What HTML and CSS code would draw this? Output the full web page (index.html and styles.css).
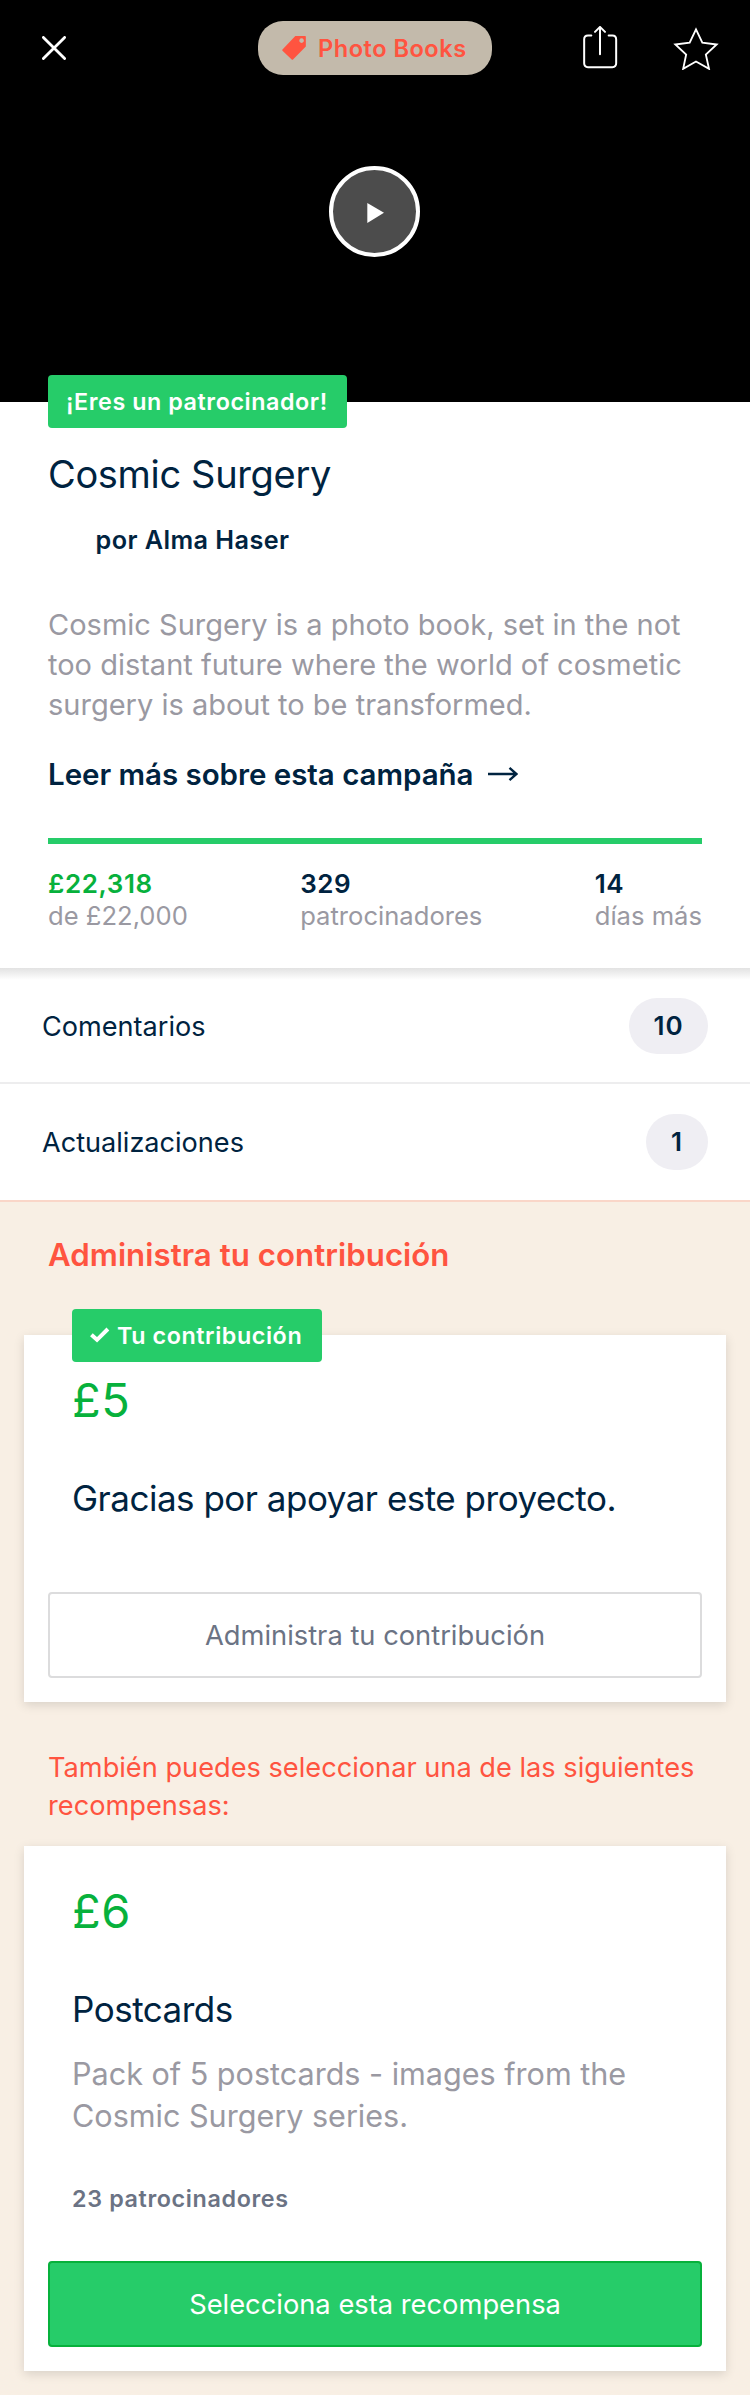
FILE: index.html
```html
<!DOCTYPE html>
<html lang="es">
<head>
<meta charset="utf-8">
<title>Cosmic Surgery</title>
<link rel="stylesheet" href="styles.css">
</head>
<body>
<header class="hero">
  <nav class="topbar">
    <svg class="close" width="24" height="24" viewBox="0 0 24 24"><path d="M1.4 1.4 22.6 22.6M22.6 1.4 1.4 22.6"/></svg>
    <div class="category">
      <svg class="tag" width="24" height="24" viewBox="0 0 72 73"><path fill-rule="evenodd" d="M40 0H70Q72 0 72 2V32L33 71.500Q31 73.500 29 71.500L1 44.500Q-1 43 1 41ZM59 7a7 7 0 1 0 0.100 0Z"/></svg>
      <span>Photo Books</span>
    </div>
    <svg class="share" width="38" height="44" viewBox="33 33 114 132"><path d="M64 61.500H54Q42.500 61.500 42.500 73V145Q42.500 156.500 54 156.500H127Q138.500 156.500 138.500 145V73Q138.500 61.500 127 61.500H116M90 118V36M75 50.500 90 35.500 105 50.500"/></svg>
    <svg class="star" width="46" height="44" viewBox="309 33 138 132"><path d="M378 43 397 83 440 88.500 407.500 118.500 417 161.500 378 139.500 339.500 161.500 348.500 118.500 316 88.500 359 83Z"/></svg>
  </nav>
  <svg class="play" width="91" height="91" viewBox="0 0 91 91"><circle cx="45.500" cy="45.500" r="43.500"/><path d="M38.300 36.900 55 46.800 38.300 57Z"/></svg>
</header>

<section class="summary">
  <div class="badge">¡Eres un patrocinador!</div>
  <h1 class="title">Cosmic Surgery</h1>
  <p class="author">por Alma Haser</p>
  <p class="blurb">Cosmic Surgery is a photo book, set in the not<br>too distant future where the world of cosmetic<br>surgery is about to be transformed.</p>
  <a class="more">Leer más sobre esta campaña
    <svg class="arrow" width="30" height="16" viewBox="0 0 30 16"><path d="M0 8H28M21.500 1.800 28.500 8 21.500 14.200"/></svg>
  </a>
  <div class="progress"></div>
  <div class="stats">
    <div class="stat"><b class="raised">£22,318</b><span>de £22,000</span></div>
    <div class="stat"><b>329</b><span>patrocinadores</span></div>
    <div class="stat"><b>14</b><span>días más</span></div>
  </div>
</section>

<section class="links">
  <div class="row first"><span>Comentarios</span><span class="count">10</span></div>
  <div class="row last"><span>Actualizaciones</span><span class="count single">1</span></div>
</section>

<main class="rewards">
  <h2 class="heading">Administra tu contribución</h2>
  <article class="card">
    <div class="badge pledge">
      <svg class="check" width="20" height="18" viewBox="0 0 20 18"><path d="M1.400 8.800 7 13.800 17.900 3"/></svg>
      <span>Tu contribución</span>
    </div>
    <div class="amount mine">£5</div>
    <h3 class="name">Gracias por apoyar este proyecto.</h3>
    <div class="button manage">Administra tu contribución</div>
  </article>
  <p class="also">También puedes seleccionar una de las siguientes<br>recompensas:</p>
  <article class="card">
    <div class="amount">£6</div>
    <h3 class="name">Postcards</h3>
    <p class="details">Pack of 5 postcards - images from the<br>Cosmic Surgery series.</p>
    <p class="backers">23 patrocinadores</p>
    <div class="button select">Selecciona esta recompensa</div>
  </article>
</main>
</body>
</html>
```
FILE: styles.css
```css
* { box-sizing: border-box; }
body {
  margin: 0;
  background: #fff;
  color: #002340;
  font-family: Inter, "Liberation Sans", sans-serif;
}
h1, h2, h3, p { margin: 0; font-weight: 400; }
svg { display: block; flex: none; }

/* Video header */
.hero { height: 402px; background: #000; }
.topbar { display: flex; align-items: center; height: 96px; padding: 0 31px 0 42px; }
.close { fill: none; stroke: #fff; stroke-width: 2.8; stroke-linecap: round; }
.category {
  display: flex;
  align-items: center;
  gap: 12px;
  width: 234px;
  height: 54px;
  margin-left: 192px;
  padding-left: 24px;
  border-radius: 25px;
  background: #c3baab;
  color: #ff5440;
  font-size: 23.6px;
  font-weight: 600;
  letter-spacing: .5px;
  white-space: nowrap;
}
.tag { fill: #ff5440; overflow: visible; }
.share, .star { fill: none; stroke: #fff; stroke-width: 6; }
.share { margin-left: 89px; stroke-linecap: round; stroke-linejoin: round; }
.star { margin-left: 54px; stroke-width: 5.500; }
.play { margin: 70px 0 0 329px; }
.play circle { fill: #4c4c4c; stroke: #fff; stroke-width: 4; }
.play path { fill: #fff; }

.badge {
  display: flex;
  align-items: center;
  width: fit-content;
  height: 53px;
  padding: 0 18px;
  border-radius: 4px;
  background: #26cc69;
  color: #fff;
  font-size: 23.3px;
  font-weight: 600;
  letter-spacing: .57px;
  white-space: nowrap;
}

/* Campaign summary */
.summary { display: flex; flex-direction: column; height: 566px; padding: 0 48px; }
.summary .badge { width: 299px; margin-top: -27px; }
.title { margin-top: 22px; font-size: 38px; line-height: 48px; letter-spacing: -.34px; }
.author {
  margin: 26px 0 0 47.500px;
  font-size: 25.2px;
  font-weight: 600;
  line-height: 32px;
  letter-spacing: .44px;
}
.blurb { margin-top: 48.500px; color: #9a99a2; font-size: 29px; line-height: 40px; white-space: nowrap; }
.more {
  display: flex;
  align-items: center;
  gap: 15px;
  margin-top: 29px;
  font-size: 29.5px;
  font-weight: 600;
  line-height: 40px;
  letter-spacing: -.04px;
}
.arrow { fill: none; stroke: #002340; stroke-width: 2.400; }
.progress { flex: none; height: 6px; margin-top: 44.500px; background: #26cc69; }
.stats { display: flex; justify-content: space-between; margin-top: 24px; font-size: 25.6px; line-height: 32px; }
.stat { display: flex; flex-direction: column; }
.stat b { font-size: 26px; font-weight: 600; letter-spacing: .6px; }
.stat span { color: #9a99a2; }
.stat .raised { color: #07b13c; }

/* Comments and updates */
.links { background: linear-gradient(#e2e2e2, #fff 12px); }
.row {
  display: flex;
  align-items: center;
  justify-content: space-between;
  height: 118px;
  padding: 0 42px;
  border-bottom: 2px solid #ededee;
  font-size: 27.1px;
}
.first { height: 116px; padding-top: 2px; }
.last { border-bottom-color: #fad6c8; }
.count {
  width: 79px;
  height: 56px;
  border-radius: 28px;
  background: #efeef3;
  font-size: 26px;
  font-weight: 600;
  line-height: 56px;
  letter-spacing: 1px;
  text-align: center;
}
.single { width: 62px; }

/* Rewards */
.rewards { padding: 32.700px 24px 24px; background: #f8efe4; }
.heading { padding-left: 24px; color: #ff5440; font-size: 31.2px; font-weight: 600; line-height: 40px; letter-spacing: .05px; }
.card {
  display: flex;
  flex-direction: column;
  padding: 0 24px 24px;
  background: #fff;
  box-shadow: 0 3px 10px rgba(0, 0, 0, .13);
}
.heading + .card { height: 367px; margin-top: 60.300px; }
.pledge { width: 250px; margin: -26px 0 0 24px; gap: 7px; letter-spacing: .58px; }
.check { fill: none; stroke: #fff; stroke-width: 4; }
.amount { margin: 37px 0 0 24px; color: #07b13c; font-size: 47px; line-height: 56px; letter-spacing: .5px; }
.mine { margin-top: 10px; }
.name { margin: 48.300px 0 0 24px; font-size: 35px; line-height: 44px; letter-spacing: -.5px; }
.button {
  height: 86px;
  border: 2px solid #dcdcdd;
  border-radius: 4px;
  font-size: 27.3px;
  line-height: 84px;
  text-align: center;
}
.manage { margin-top: 71.700px; color: #6b7384; }
.also {
  margin: 47px 0 21px 24px;
  color: #ff5440;
  font-size: 27.2px;
  line-height: 38px;
  white-space: nowrap;
}
.details { margin: 21.600px 0 0 24px; color: #9a99a2; font-size: 30.6px; line-height: 42px; letter-spacing: -.02px; }
.backers {
  margin: 46.600px 0 0 24px;
  color: #6b7384;
  font-size: 23.3px;
  font-weight: 600;
  line-height: 32px;
  letter-spacing: .64px;
}
.select { margin-top: 45.500px; border-color: #07b13c; background: #26cc69; color: #fff; }
```
